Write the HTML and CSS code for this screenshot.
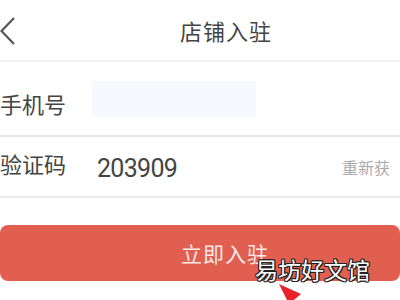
FILE: index.html
```html
<!DOCTYPE html>
<html lang="zh-CN">
<head>
  <meta charset="UTF-8" />
  <title>店铺入驻</title>
  <link rel="stylesheet" href="styles.css">
</head>
<body>
  <header class="topbar">
    <svg class="back" width="16" height="28" viewBox="0 0 16 28">
      <path d="M14 1 L1.5 14 L14 27" fill="none" stroke="#555" stroke-width="2.2" />
    </svg>
    <h1>店铺入驻</h1>
  </header>

  <div class="form">
    <div class="row row-phone">
      <span class="label">手机号</span>
      <div class="phone-box"></div>
    </div>
    <div class="row row-code">
      <span class="label">验证码</span>
      <span class="code">203909</span>
      <span class="resend">重新获</span>
    </div>
  </div>

  <div class="submit">
    <button class="submit-btn">立即入驻</button>
    <span class="watermark">易坊好文馆</span>
    <svg class="arrow" width="30" height="20" viewBox="0 0 30 20">
      <polygon points="0,0 22,10 10,20" fill="#e8212a" />
    </svg>
  </div>
</body>
</html>
```

FILE: styles.css
```css
body {
  margin: 0;
  width: 400px;
  height: 300px;
  overflow: hidden;
  background: #fff;
  font-family: "Noto Sans CJK SC", "Noto Sans", sans-serif;
  color: #333;
}
.topbar {
  height: 60px;
  display: flex;
  align-items: center;
  border-bottom: 2px solid #f2f2f2;
}
.back {
  margin-top: 2px;
}
.topbar h1 {
  margin: 0 0 0 164px;
  font-size: 22px;
  font-weight: normal;
  color: #444;
  letter-spacing: 1px;
}
.row {
  display: flex;
  align-items: center;
  border-bottom: 2px solid #e8e8e8;
}
.row span {
  line-height: 1;
}
.row-phone {
  height: 73px;
}
.row-code {
  height: 59px;
}
.label {
  font-size: 22px;
  color: #444;
  width: 92px;
}
.row-phone .label {
  padding-top: 8px;
}
.row-code .label {
  margin-top: -8px;
}
.phone-box {
  width: 164px;
  height: 36px;
  background: #f8f9fe;
}
.code {
  font-family: Roboto, "Noto Sans", sans-serif;
  font-size: 25px;
  letter-spacing: -0.7px;
  color: #444;
  margin-left: 5px;
  padding-top: 4px;
  flex: 1;
}
.resend {
  font-size: 16px;
  color: #aaa;
  margin-right: 10px;
}
.submit {
  position: relative;
  padding-top: 27px;
}
.submit-btn {
  display: block;
  width: 400px;
  height: 56px;
  border: none;
  border-radius: 8px;
  background: #e05f51;
  color: #fbe9e6;
  font-family: "Noto Sans CJK SC", sans-serif;
  font-size: 21px;
  letter-spacing: 1px;
  padding: 0 0 0 50px;
}
.watermark {
  position: absolute;
  left: 255px;
  top: 54px;
  font-size: 23px;
  color: #fff;
  text-shadow: 1px 1px 0 #222, -1px -1px 0 #222, 1px -1px 0 #222, -1px 1px 0 #222, 0 1px 0 #222, 0 -1px 0 #222, 1px 0 0 #222, -1px 0 0 #222;
}
.arrow {
  position: absolute;
  left: 279px;
  top: 86px;
}
```
